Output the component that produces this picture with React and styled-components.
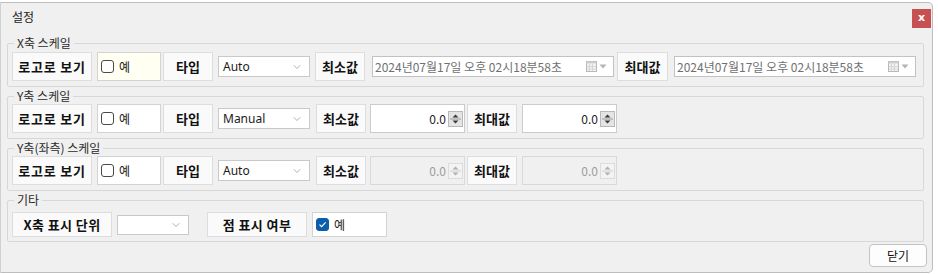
import { styled, createGlobalStyle } from "styled-components";
import { ChevronDown } from "lucide-react";

const GlobalStyle = createGlobalStyle`
  body {
    margin: 0;
    background: #ffffff;
    font-family: "Noto Sans CJK KR", "Noto Sans", sans-serif;
    color: #1a1a1a;
  }
`;

const DATE_TEXT = "2024년07월17일 오후 02시18분58초";

const Checkbox = ({ checked }) => (
  <CheckMark $checked={checked}>
    {checked && (
      <svg width="9" height="9" viewBox="0 0 9 9">
        <path d="M1.5 4.6 L3.6 6.6 L7.6 2.3" fill="none" stroke="#fff" strokeWidth="1.2" />
      </svg>
    )}
  </CheckMark>
);

const Select = ({ value, w, ml, h }) => (
  <SelectBox $w={w} $ml={ml} $h={h}>
    <span>{value}</span>
    <ChevronDown size={12} strokeWidth={1.2} color="#7a7a7a" />
  </SelectBox>
);

const DatePicker = ({ ml }) => (
  <DateBox $ml={ml}>
    <span>{DATE_TEXT}</span>
    <DateIcons>
      <svg width="11" height="11" viewBox="0 0 11 11">
        <rect x="0.5" y="0.5" width="10" height="10" fill="#f2f2f2" stroke="#b9b9b9" />
        <rect x="0.5" y="0.5" width="10" height="2" fill="#cfcfcf" />
        <path d="M3.5 3 V10 M6.5 3 V10 M1 5.5 H10 M1 8 H10" stroke="#d6d6d6" />
      </svg>
      <svg width="8" height="5" viewBox="0 0 8 5">
        <path d="M0.5 0.5 L4 4.5 L7.5 0.5 Z" fill="#b4b4b4" />
      </svg>
    </DateIcons>
  </DateBox>
);

const NumberInput = ({ ml, disabled }) => (
  <NumBox $ml={ml} $disabled={disabled}>
    <span>0.0</span>
    <Spinner $disabled={disabled}>
      <svg width="13" height="14" viewBox="0 0 13 14">
        <path d="M3.5 5.5 L6.5 2.5 L9.5 5.5 Z" fill={disabled ? "#b0b0b0" : "#3a3a3a"} />
        <path d="M1 7 H12" stroke={disabled ? "#d0d0d0" : "#9a9a9a"} />
        <path d="M3.5 8.5 L6.5 11.5 L9.5 8.5 Z" fill={disabled ? "#b0b0b0" : "#3a3a3a"} />
      </svg>
    </Spinner>
  </NumBox>
);

const ScaleGroup = ({ title, type, ivory, mode, pt }) => (
  <Group $pt={pt}>
    <Legend>{title}</Legend>
    <Row $h={29}>
      <LabelBox $w={80} $spacing={0.8}>로고로 보기</LabelBox>
      <CheckCell $w={64} $ml={5} $ivory={ivory}>
        <Checkbox />
        <span>예</span>
      </CheckCell>
      <LabelBox $w={50} $ml={2}>타입</LabelBox>
      <Select value={type} w={92} ml={5} />
      {mode === "date" ? (
        <>
          <LabelBox $w={50} $ml={5}>최소값</LabelBox>
          <DatePicker ml={7} />
          <LabelBox $w={51} $ml={3}>최대값</LabelBox>
          <DatePicker ml={6} />
        </>
      ) : (
        <>
          <LabelBox $w={50} $ml={6}>최소값</LabelBox>
          <NumberInput ml={4} disabled={mode === "disabled"} />
          <LabelBox $w={50} $ml={2}>최대값</LabelBox>
          <NumberInput ml={5} disabled={mode === "disabled"} />
        </>
      )}
    </Row>
  </Group>
);

const App = () => {
  return (
    <>
      <GlobalStyle />
      <Dialog>
        <Header>
          <Title>설정</Title>
          <CloseButton>x</CloseButton>
        </Header>
        <Body>
          <ScaleGroup title="X축 스케일" type="Auto" ivory mode="date" pt={3} />
          <ScaleGroup title="Y축 스케일" type="Manual" mode="number" pt={2} />
          <ScaleGroup title="Y축(좌측) 스케일" type="Auto" mode="disabled" pt={2} />
          <Group $pt={6} $pb={4}>
            <Legend>기타</Legend>
            <Row $h={25}>
              <LabelBox $w={100} $spacing={0.4}>X축 표시 단위</LabelBox>
              <Select value="" w={72} ml={5} h={20} />
              <LabelBox $w={100} $ml={18} $spacing={0.4}>점 표시 여부</LabelBox>
              <CheckCell $w={75} $ml={5}>
                <Checkbox checked />
                <span>예</span>
              </CheckCell>
            </Row>
          </Group>
        </Body>
        <Footer>
          <CloseTextButton>닫기</CloseTextButton>
        </Footer>
      </Dialog>
    </>
  );
};

const Dialog = styled.div`
  width: 933px;
  height: 271px;
  margin-top: 2px;
  box-sizing: border-box;
  background: #f0f0f0;
  border: 1px solid #bdbdbd;
  border-left-color: #d0d0d0;
  border-radius: 0 5px 5px 0;
  display: flex;
  flex-direction: column;
`;

const Header = styled.div`
  height: 34px;
  box-sizing: border-box;
  padding: 6px 1px 0 11px;
  display: flex;
  justify-content: space-between;
  align-items: flex-start;
`;

const Title = styled.div`
  font-size: 12px;
  line-height: 14px;
  padding-top: 1px;
  color: #222;
`;

const CloseButton = styled.div`
  width: 19px;
  height: 19px;
  background: #c75050;
  color: #fff;
  font-family: "DejaVu Sans", sans-serif;
  font-weight: bold;
  font-size: 11px;
  line-height: 17px;
  text-align: center;
`;

const Body = styled.div`
  padding: 0 8px 0 6px;
  display: flex;
  flex-direction: column;
  gap: 3px;
`;

const Group = styled.fieldset`
  margin: 0;
  min-width: 0;
  padding: ${(p) => p.$pt}px 4px ${(p) => p.$pb ?? 5}px;
  border: 1px solid #d7d7d7;
  border-radius: 2px;
`;

const Legend = styled.legend`
  margin-left: 2px;
  padding: 0 3px;
  font-size: 12px;
  line-height: 12px;
  color: #2a2a2a;
`;

const Row = styled.div`
  display: flex;
  align-items: center;
  height: ${(p) => p.$h}px;
`;

const LabelBox = styled.div`
  width: ${(p) => p.$w}px;
  height: 100%;
  margin-left: ${(p) => p.$ml ?? 0}px;
  box-sizing: border-box;
  flex-shrink: 0;
  background: #fafafa;
  border: 1px solid #dddddd;
  display: flex;
  align-items: center;
  justify-content: center;
  font-size: 13px;
  font-weight: bold;
  letter-spacing: ${(p) => p.$spacing ?? 0}px;
  color: #111;
`;

const CheckCell = styled.div`
  width: ${(p) => p.$w}px;
  height: 100%;
  margin-left: ${(p) => p.$ml ?? 0}px;
  box-sizing: border-box;
  flex-shrink: 0;
  background: ${(p) => (p.$ivory ? "#fffff2" : "#ffffff")};
  border: 1px solid #d3d3d3;
  display: flex;
  align-items: center;
  gap: 5px;
  padding-left: 3px;
  font-size: 12px;
  color: #222;
`;

const CheckMark = styled.span`
  width: 13px;
  height: 13px;
  box-sizing: border-box;
  border-radius: 3px;
  border: 1px solid ${(p) => (p.$checked ? "#0c5ead" : "#4a4a4a")};
  background: ${(p) => (p.$checked ? "#0c5ead" : "#ffffff")};
  display: flex;
  align-items: center;
  justify-content: center;
`;

const SelectBox = styled.div`
  width: ${(p) => p.$w}px;
  height: ${(p) => p.$h ?? 21}px;
  margin-left: ${(p) => p.$ml ?? 0}px;
  box-sizing: border-box;
  flex-shrink: 0;
  background: #ffffff;
  border: 1px solid #c9c9c9;
  display: flex;
  align-items: center;
  justify-content: space-between;
  padding: 0 6px 0 4px;
  font-family: "Noto Sans", sans-serif;
  font-size: 12px;
  color: #1a1a1a;
`;

const DateBox = styled.div`
  width: 242px;
  height: 21px;
  margin-left: ${(p) => p.$ml ?? 0}px;
  box-sizing: border-box;
  flex-shrink: 0;
  background: #ffffff;
  border: 1px solid #c2c2c2;
  display: flex;
  align-items: center;
  justify-content: space-between;
  padding: 0 6px 0 2px;
  font-size: 12px;
  color: #707070;
`;

const DateIcons = styled.div`
  display: flex;
  align-items: center;
  gap: 2px;
`;

const NumBox = styled.div`
  width: 95px;
  height: 100%;
  margin-left: ${(p) => p.$ml ?? 0}px;
  box-sizing: border-box;
  flex-shrink: 0;
  background: ${(p) => (p.$disabled ? "#f0f0f0" : "#ffffff")};
  border: 1px solid ${(p) => (p.$disabled ? "#d9d9d9" : "#cccccc")};
  display: flex;
  align-items: center;
  justify-content: flex-end;
  gap: 2px;
  padding-right: 1px;
  font-size: 12px;
  color: ${(p) => (p.$disabled ? "#9c9c9c" : "#222")};
`;

const Spinner = styled.div`
  width: 15px;
  height: 16px;
  box-sizing: border-box;
  background: ${(p) => (p.$disabled ? "#f3f3f3" : "#e4e4e4")};
  border: 1px solid ${(p) => (p.$disabled ? "#dcdcdc" : "#b8b8b8")};
  display: flex;
  align-items: center;
  justify-content: center;
`;

const Footer = styled.div`
  display: flex;
  justify-content: flex-end;
  padding: 2px 5px 0 0;
`;

const CloseTextButton = styled.div`
  width: 58px;
  height: 23px;
  box-sizing: border-box;
  background: #fdfdfd;
  border: 1px solid #c3c3c3;
  border-radius: 4px;
  display: flex;
  align-items: center;
  justify-content: center;
  font-size: 12px;
  color: #111;
`;

export default App;
